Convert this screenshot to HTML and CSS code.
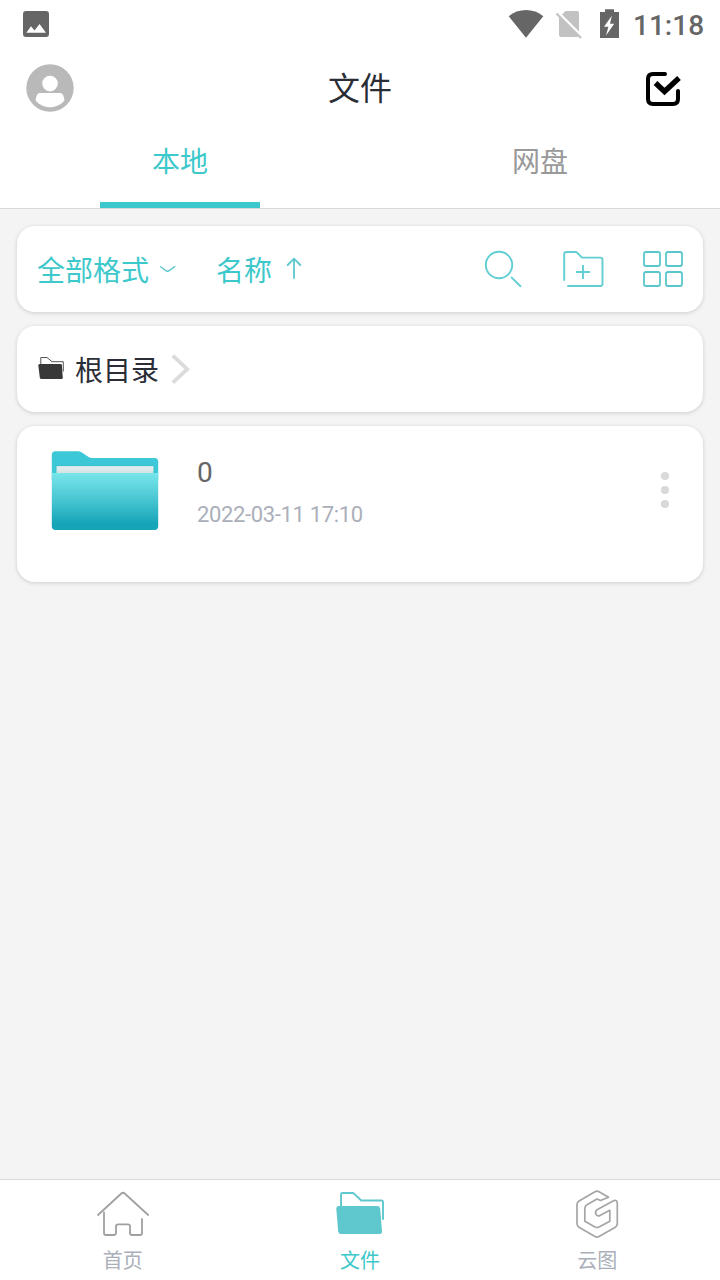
FILE: index.html
```html
<!DOCTYPE html>
<html lang="zh-CN">
<head>
<meta charset="utf-8">
<title>文件</title>
<link rel="stylesheet" href="styles.css">
</head>
<body>
<div class="app">
  <div class="status">
    <svg class="status-photo" width="26" height="26" viewBox="0 0 26 26"><path fill="#666" fill-rule="evenodd" d="M3 0H23Q26 0 26 3V23Q26 26 23 26H3Q0 26 0 23V3Q0 0 3 0ZM3.300 21.800H23L16.500 13L11.500 19.500L8 15.300Z"/></svg>
    <svg class="status-wifi" width="36" height="48" viewBox="508 0 36 48"><path fill="#666" d="M508.700 16.200C518.500 8 533.500 8 543.300 16.200L526 37.800Z"/></svg>
    <svg class="status-sim" width="28" height="48" viewBox="555 0 28 48"><path fill="#c2c2c2" d="M565.500 11H577Q579 11 579 13V31.500L562 14.500ZM559 17L578.300 36.300Q578 37 576.500 37H561.500Q559 37 559 34.500Z"/><path d="M556.500 13.500L581 38" stroke="#c2c2c2" stroke-width="2.200"/></svg>
    <svg class="status-battery" width="20" height="48" viewBox="600 0 20 48"><path fill="#666" fill-rule="evenodd" d="M605 9.300H614V12H619V38H600V12H605ZM611.800 15.800L604 26.800H608.400L606 35.400L614.200 23.700H610Z"/></svg>
    <span class="clock">11:18</span>
  </div>
  <header class="header">
    <svg width="48" height="48" viewBox="0 0 48 48"><circle cx="24" cy="24" r="23.700" fill="#b9b9b9"/><circle cx="24" cy="19.600" r="7.800" fill="#fff"/><path fill="#fff" d="M14 29H34Q37 29 38 34L38.500 36.500C31 45.500 17 45.500 9.600 36.500L10 34Q11 29 14 29Z"/></svg>
    <h1 class="title">文件</h1>
    <svg width="36" height="36" viewBox="645 71 36 36" fill="none" stroke="#000" stroke-width="4"><path stroke-linecap="round" d="M665 74H653Q648 74 648 79V99Q648 104 653 104H673Q678 104 678 99V91"/><path stroke-width="5.400" d="M655.500 83L664.500 91.500L679 78"/></svg>
  </header>
  <nav class="tabs">
    <div class="tab tab-active"><span>本地</span></div>
    <div class="tab"><span>网盘</span></div>
  </nav>
  <main class="content">
    <section class="card toolbar">
      <span class="filter">全部格式</span>
      <svg class="chevron" width="18" height="10" viewBox="159 263 18 10" fill="none" stroke="#5ec8ce" stroke-width="1.400" stroke-linecap="round"><path d="M160.500 265.700L166.300 269.800Q167.500 270.600 168.700 269.800L174.800 265.700"/></svg>
      <span class="filter">名称</span>
      <svg class="arrow" width="16" height="24" viewBox="286 257 16 24" fill="none" stroke="#5ec8ce" stroke-width="1.800" stroke-linecap="round" stroke-linejoin="round"><path d="M294 278V259M287.700 265L294 258.700L300.300 265"/></svg>
      <div class="tools">
        <svg width="40" height="40" viewBox="484 249 40 40" fill="none" stroke="#61ced3" stroke-width="1.900" stroke-linecap="round"><circle cx="499" cy="265" r="13.200"/><path d="M511.700 277.600L520.500 286.200"/></svg>
        <svg width="42" height="40" viewBox="562 249 42 40" fill="none" stroke="#61ced3" stroke-width="1.900" stroke-linecap="round" stroke-linejoin="round"><path d="M564.200 280V254.200Q564.200 252 566.400 252H575.500Q576.500 252 577.300 252.800L582 257.600H600.300Q602.500 257.600 602.500 259.800V283.800Q602.500 286 600.300 286H568"/><path d="M576.800 272H589.200M583 265.800V278.200"/></svg>
        <svg width="42" height="40" viewBox="642 249 42 40" fill="none" stroke="#5ac7cd" stroke-width="1.800"><rect x="644" y="252" width="16" height="14" rx="2"/><rect x="666" y="252" width="16" height="14" rx="2"/><rect x="644" y="272" width="16" height="14" rx="2"/><rect x="666" y="272" width="16" height="14" rx="2"/></svg>
      </div>
    </section>
    <section class="card path">
      <svg width="28" height="26" viewBox="37 356 28 26"><path d="M40.800 364V357.500H47L52 361.700H63.300V371.500" fill="none" stroke="#555" stroke-width="1"/><path fill="#383838" d="M39.500 364H60.500Q61.800 364 61.900 365.200L62.800 377.800Q62.800 379 61.500 379H41.500Q40 379 39.800 377.500L38.300 365.500Q38.300 364 39.500 364Z"/></svg>
      <span class="path-name">根目录</span>
      <svg width="20" height="32" viewBox="171 353 20 32" fill="none" stroke="#dbdbdb" stroke-width="3.800"><path d="M172.800 355.600L187.200 369.200L172.800 382.600"/></svg>
    </section>
    <section class="card file">
      <svg class="folder" width="108" height="80" viewBox="51 451 108 80">
        <defs><linearGradient id="front" x1="0" y1="0" x2="0" y2="1"><stop offset="0" stop-color="#78e5ea"/><stop offset=".48" stop-color="#47c5d1"/><stop offset=".88" stop-color="#16a5b8"/><stop offset="1" stop-color="#17a4b7"/></linearGradient><linearGradient id="paper" x1="0" y1="0" x2="0" y2="1"><stop offset="0" stop-color="#d5e4e5"/><stop offset=".25" stop-color="#e2edee"/><stop offset="1" stop-color="#cfe0e1"/></linearGradient></defs>
        <path fill="#3dc8d8" d="M55.500 451.200H78Q80 451.200 81.500 452.200L89 457.200Q90 457.900 92 457.900H154.500Q158.200 457.900 158.200 461.500V480H51.800V455Q51.800 451.200 55.500 451.200Z"/>
        <path fill="#2ca9b9" opacity=".4" d="M55.500 465.500H154.500V474H55.500Z"/>
        <path fill="url(#paper)" d="M56.500 466H153.500V474H56.500Z"/>
        <path fill="url(#front)" d="M51.800 473H158.200V526Q158.200 530 154.500 530H55.500Q51.800 530 51.800 526Z"/>
      </svg>
      <div class="info"><div class="name">0</div><div class="date">2022-03-11 17:10</div></div>
      <svg class="more" width="10" height="40" viewBox="0 0 10 40" fill="#d9d9d9"><circle cx="5" cy="6" r="4.100"/><circle cx="5" cy="20" r="4.100"/><circle cx="5" cy="34" r="4.100"/></svg>
    </section>
  </main>
  <nav class="bottom">
    <div class="item">
      <svg width="54" height="50" viewBox="96 1189 54 50" fill="none" stroke="#a0a0a0" stroke-width="1.800" stroke-linecap="round" stroke-linejoin="round"><path d="M98 1215L121.300 1193.500Q123 1192 124.700 1193.500L148.200 1215M104 1212.500V1233Q104 1235 106 1235H113.500Q116 1235 116 1233V1226.500Q116 1224.300 118.200 1224.300H128Q130 1224.300 130 1226.500V1233Q130 1235 132.200 1235H140Q142 1235 142 1233V1219"/></svg>
      <span>首页</span>
    </div>
    <div class="item item-active">
      <svg width="50" height="50" viewBox="335 1189 50 50"><path fill="none" stroke="#5ec8ce" stroke-width="1.900" stroke-linecap="round" stroke-linejoin="round" d="M341 1208V1194.500Q341 1193 342.500 1193H352.500Q353.500 1193 354.300 1193.800L361.200 1200.500H381.500Q383 1200.500 383 1202V1219"/><path fill="#5ec8ce" d="M339 1206H377.500Q380 1206 380.200 1208.500L382 1231.500Q382 1234 379.500 1234H341Q338.500 1234 338.200 1231.500L336.300 1208.500Q336.300 1206 339 1206Z"/></svg>
      <span>文件</span>
    </div>
    <div class="item">
      <svg width="44" height="50" viewBox="575 1189 44 50" fill="none" stroke="#a5a5a5" stroke-width="1.700" stroke-linejoin="round"><path d="M608.500 1197.300L599 1191.700Q597 1190.600 595 1191.700L579 1201Q577 1202.200 577 1204.500V1223.500Q577 1226 579 1227.200L595 1236.500Q597 1237.600 599 1236.500L615.300 1227.200Q617.300 1226 617.300 1223.500V1203.500Q617.300 1199 613.500 1200.800L597.500 1209.500C593.500 1212 596.500 1217.500 600 1215.500L609.800 1210.300V1221.300L599 1227Q597 1228 595 1227L584.800 1221.300V1208.500Q584.800 1206 587 1204.800L597 1199L600.500 1200.500Z"/></svg>
      <span>云图</span>
    </div>
  </nav>
</div>
</body>
</html>
```

FILE: styles.css
```css
* { box-sizing: border-box; }
body { margin: 0; font-family: Roboto, "Noto Sans CJK SC", sans-serif; background: #f4f4f4; }
svg { display: block; flex: none; }
.app { width: 720px; height: 1280px; display: flex; flex-direction: column; overflow: hidden; }
.status { height: 48px; display: flex; align-items: center; padding: 0 16px 0 23px; background: #fff; }
.status-wifi { margin-left: auto; }
.status-sim { margin-left: 11px; }
.status-battery { margin-left: 17px; }
.clock { width: 71px; margin: 3px 0 0 13px; font-size: 28px; line-height: 34px; font-weight: 500; color: #666; white-space: nowrap; }
.header { height: 80px; display: flex; align-items: center; justify-content: space-between; padding: 0 39px 0 26px; background: #fff; }
.title { margin: 2px 0 0 1px; font-size: 32px; line-height: 48px; font-weight: 400; color: #2a2d36; }
.header > svg:last-child { margin-top: 2px; }
.tabs { height: 81px; display: flex; background: #fff; border-bottom: 1px solid #d9d9d9; }
.tab { flex: 1; display: flex; justify-content: center; color: #999; font-size: 28px; line-height: 40px; }
.tab span { width: 160px; height: 80px; padding-top: 15px; text-align: center; }
.tab-active { color: #3dc8cb; }
.tab-active span { border-bottom: 6px solid #3dc8cb; }
.content { flex: 1; padding: 17px 17px 0; display: flex; flex-direction: column; gap: 14px; }
.card { background: #fff; border-radius: 18px; box-shadow: 0 1px 4px rgba(0, 0, 0, 0.16); display: flex; align-items: center; flex: none; }
.toolbar { height: 86px; padding: 0 19px 0 20px; }
.filter { padding-top: 6px; font-size: 28px; line-height: 40px; color: #3dc8cb; }
.chevron { margin: 0 39px 0 10px; }
.arrow { margin-left: 14px; }
.tools { margin-left: auto; display: flex; gap: 38px; }
.path { height: 86px; padding-left: 20px; }
.path-name { margin: 0 12px 0 10px; padding-top: 5px; font-size: 28px; line-height: 40px; color: #2a2d36; }
.file { height: 156px; padding: 25px 33px 0 34px; align-items: flex-start; }
.info { margin-left: 38px; padding-top: 3px; }
.name { font-size: 28px; line-height: 38px; color: #666; }
.date { margin-top: 9px; font-size: 22px; line-height: 28px; color: #abafba; letter-spacing: -0.35px; }
.more { margin: 19px 0 0 auto; }
.bottom { height: 101px; padding: 0 4px; display: flex; background: #fff; border-top: 1px solid #d9d9d9; }
.item { flex: 1; padding-top: 9px; display: flex; flex-direction: column; align-items: center; font-size: 20px; line-height: 28px; color: #abafba; }
.item span { margin-top: 8px; }
.item-active { color: #3dc8cb; }
```
